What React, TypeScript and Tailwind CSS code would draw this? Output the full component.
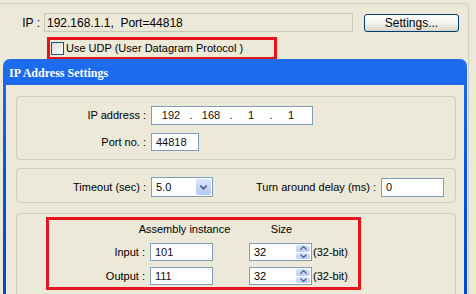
import { ChevronDown } from "lucide-react";

const font = { fontFamily: '"Liberation Sans", Arial, sans-serif' };

const Field = ({ value, className }: { value: string; className: string }) => (
  <div className={`flex items-center border border-[#7F9DB9] bg-white pl-[4px] text-[#111] ${className}`}>
    {value}
  </div>
);

const Spinner = ({ value }: { value: string }) => (
  <div className="flex h-[18px] w-[63px] items-stretch border border-[#7F9DB9] bg-white p-px">
    <div className="flex flex-1 items-center pl-[3px]">{value}</div>
    <div className="flex w-[14px] flex-col gap-px">
      <div className="flex flex-1 items-center justify-center rounded-[2px] bg-gradient-to-b from-[#DCE6FD] to-[#B9CCF8]">
        <svg width="7" height="4" viewBox="0 0 7 4">
          <path d="M0.5 3.5 L3.5 0.5 L6.5 3.5" fill="none" stroke="#4D6185" strokeWidth="1.3" />
        </svg>
      </div>
      <div className="flex flex-1 items-center justify-center rounded-[2px] bg-gradient-to-b from-[#DCE6FD] to-[#B9CCF8]">
        <svg width="7" height="4" viewBox="0 0 7 4">
          <path d="M0.5 0.5 L3.5 3.5 L6.5 0.5" fill="none" stroke="#4D6185" strokeWidth="1.3" />
        </svg>
      </div>
    </div>
  </div>
);

export default function App() {
  const octets = ["192", "168", "1", "1"];

  return (
    <div className="relative h-[294px] w-[476px] overflow-hidden bg-[#ECE9D8] text-[11px] text-black" style={font}>
      {/* Background connection group */}
      <div className="ml-[-10px] mt-[3px] h-[400px] w-[479px] rounded-[4px] border border-[#D0D0BF] pt-[9px]">
        <div className="flex items-start">
          <div className="flex h-[19px] w-[53px] items-center justify-end pr-[4px] text-[12px]">IP :</div>
          <div className="flex h-[19px] w-[309px] items-center border border-[#C9C7BA] bg-[#ECE9D8] pl-[2px] text-[12px]">
            192.168.1.1,&nbsp; Port=44818
          </div>
          <button className="ml-[11px] mt-px flex h-[18px] w-[95px] items-center justify-center rounded-[3px] border border-[#003C74] bg-gradient-to-b from-white via-[#F4F3EE] to-[#D9D5C8] text-[12px]">
            Settings...
          </button>
        </div>

        <div className="ml-[56px] mt-[5px] flex h-[23px] w-[230px] items-center border-[3px] border-[#E5131B] pl-px">
          <div className="h-[13px] w-[13px] border border-[#1C5180] bg-gradient-to-br from-[#DCDCD7] to-white" />
          <span className="ml-[2px] whitespace-nowrap text-[11px]">Use UDP (User Datagram Protocol )</span>
        </div>
      </div>

      {/* IP Address Settings dialog window */}
      <div className="absolute bottom-0 left-[3px] top-[59px] flex w-[464px] flex-col rounded-t-[7px] bg-gradient-to-b from-[#1F6DEE] via-[#0055E5] to-[#0047D4] px-[3px]">
        <div className="flex h-[26px] items-center pl-[3px] pt-px">
          <span className="text-[12px] font-bold text-white" style={{ fontFamily: '"Liberation Serif", "Times New Roman", serif' }}>
            IP Address Settings
          </span>
        </div>

        <div className="flex flex-1 flex-col bg-[#ECE9D8] pl-[10px] pr-[8px] pt-[11px]">
          {/* Address group */}
          <div className="h-[64px] rounded-[4px] border border-[#D0D0BF] pt-[9px]">
            <div className="flex items-center">
              <div className="w-[129px] text-right">IP address :</div>
              <div className="ml-[5px] flex h-[19px] w-[162px] items-center border border-[#7F9DB9] bg-white pl-[1px] text-[#111]">
                {octets.map((o, i) => (
                  <div key={i} className="flex items-center">
                    {i > 0 && <span className="w-[4px] text-center">.</span>}
                    <span className="w-[36px] text-center">{o}</span>
                  </div>
                ))}
              </div>
            </div>
            <div className="mt-[8px] flex items-center">
              <div className="w-[129px] text-right">Port no. :</div>
              <Field value="44818" className="ml-[5px] h-[18px] w-[48px]" />
            </div>
          </div>

          {/* Timing group */}
          <div className="mt-[8px] flex h-[35px] items-start rounded-[4px] border border-[#D0D0BF] pr-[11px] pt-[8px]">
            <div className="flex h-[20px] w-[129px] items-center justify-end">Timeout (sec) :</div>
            <div className="ml-[5px] flex h-[20px] w-[62px] items-stretch border border-[#7F9DB9] bg-white p-px">
              <div className="flex flex-1 items-center pl-[3px]">5.0</div>
              <div className="flex w-[15px] items-center justify-center rounded-[2px] bg-gradient-to-b from-[#DCE6FD] to-[#B4C8F6]">
                <ChevronDown size={11} strokeWidth={3.5} color="#4D6185" />
              </div>
            </div>
            <div className="flex h-[20px] flex-1 items-center justify-end">Turn around delay (ms) :</div>
            <Field value="0" className="ml-[5px] mt-px h-[19px] w-[63px]" />
          </div>

          {/* Assembly group */}
          <div className="mt-[10px] flex-1 rounded-t-[4px] border border-b-0 border-[#D0D0BF] pl-[29px] pt-[3px]">
            <div className="w-[315px] border-[3px] border-[#E5131B] pb-[2px] pt-[2px]">
              <div className="flex h-[14px] items-center">
                <div className="w-[96px]" />
                <div className="ml-[5px] flex w-[63px] justify-center whitespace-nowrap pl-[6px]">Assembly instance</div>
                <div className="ml-[36px] flex w-[63px] justify-center pl-[2px]">Size</div>
              </div>
              <div className="mt-[7px] flex items-center">
                <div className="w-[96px] text-right">Input :</div>
                <Field value="101" className="ml-[5px] h-[18px] w-[63px]" />
                <div className="ml-[36px]">
                  <Spinner value="32" />
                </div>
                <span className="ml-px">(32-bit)</span>
              </div>
              <div className="mt-[6px] flex items-center">
                <div className="w-[96px] text-right">Output :</div>
                <Field value="111" className="ml-[5px] h-[18px] w-[63px]" />
                <div className="ml-[36px]">
                  <Spinner value="32" />
                </div>
                <span className="ml-px">(32-bit)</span>
              </div>
            </div>
          </div>
        </div>
      </div>
    </div>
  );
}
